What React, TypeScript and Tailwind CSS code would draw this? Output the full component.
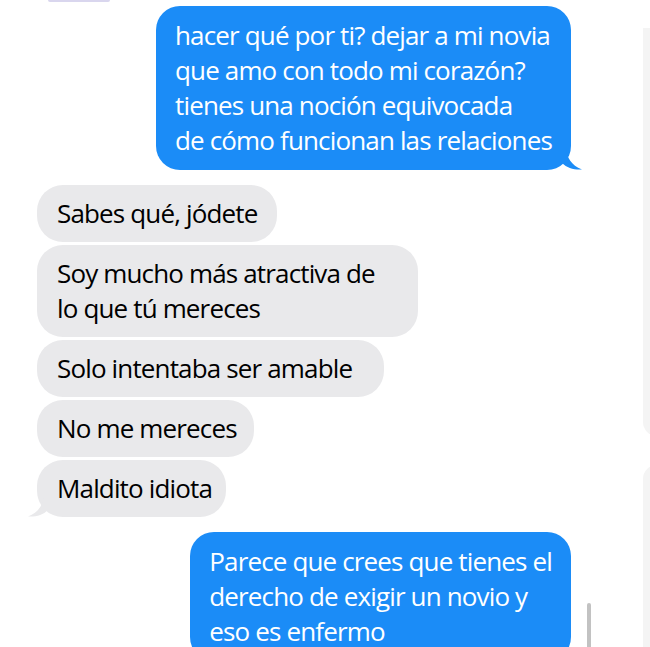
const font = { fontFamily: '"Open Sans", "Noto Sans", sans-serif' };

function BlueTail() {
  return (
    <svg
      className="absolute -right-[11px] bottom-0"
      width="20"
      height="22"
      viewBox="0 0 20 22"
    >
      <path d="M0 0 L4 0 C5 10 9 17 20 21.5 C12 22 5 20 0 15 Z" fill="#1b8cf7" />
    </svg>
  );
}

function GrayTail() {
  return (
    <svg
      className="absolute -left-[9px] bottom-0"
      width="20"
      height="22"
      viewBox="0 0 20 22"
    >
      <path d="M20 0 L16 0 C15 10 11 17 0 21.5 C8 22 15 20 20 15 Z" fill="#e9e9eb" />
    </svg>
  );
}

function Sent({ lines, tail }: { lines: string[]; tail?: boolean }) {
  return (
    <div className="relative self-end w-fit rounded-[24px] bg-[#1b8cf7] px-[19px] py-[12px] text-white">
      {lines.map((l, i) => (
        <div key={i} className="whitespace-nowrap">
          {l}
        </div>
      ))}
      {tail && <BlueTail />}
    </div>
  );
}

function Received({
  lines,
  tail,
  pad = "pr-[20px]",
}: {
  lines: string[];
  tail?: boolean;
  pad?: string;
}) {
  return (
    <div
      className={`relative w-fit rounded-[26px] bg-[#e9e9eb] pl-[20px] py-[11px] text-black ${pad}`}
    >
      {lines.map((l, i) => (
        <div key={i} className="whitespace-nowrap">
          {l}
        </div>
      ))}
      {tail && <GrayTail />}
    </div>
  );
}

export default function App() {
  return (
    <div
      className="relative h-[647px] w-[650px] overflow-hidden bg-white text-[26px] leading-[35px] tracking-[-0.85px]"
      style={font}
    >
      <div className="absolute left-[48px] top-0 h-[2px] w-[62px] rounded-b-full bg-[#d9d6ee]" />
      <div className="absolute left-[643px] top-[28px] h-[408px] w-[20px] rounded-bl-[14px] bg-[#f4f4f4]" />
      <div className="absolute left-[643px] top-[465px] h-[200px] w-[20px] rounded-tl-[14px] bg-[#f4f4f4]" />
      <div className="absolute left-[587px] top-[603px] h-[50px] w-[4px] rounded-full bg-[#c2c2c2]" />

      <div className="flex flex-col pl-[37px] pr-[79px] pt-[6px]">
        <Sent
          tail
          lines={[
            "hacer qué por ti? dejar a mi novia",
            "que amo con todo mi corazón?",
            "tienes una noción equivocada",
            "de cómo funcionan las relaciones",
          ]}
        />
        <div className="mt-[15px] flex flex-col gap-[3px]">
          <Received lines={["Sabes qué, jódete"]} />
          <Received
            pad="pr-[43px]"
            lines={["Soy mucho más atractiva de", "lo que tú mereces"]}
          />
          <Received pad="pr-[32px]" lines={["Solo intentaba ser amable"]} />
          <Received pad="pr-[17px]" lines={["No me mereces"]} />
          <Received tail pad="pr-[14px]" lines={["Maldito idiota"]} />
        </div>
        <div className="mt-[15px] flex flex-col">
          <Sent
            lines={[
              "Parece que crees que tienes el",
              "derecho de exigir un novio y",
              "eso es enfermo",
            ]}
          />
        </div>
      </div>
    </div>
  );
}
